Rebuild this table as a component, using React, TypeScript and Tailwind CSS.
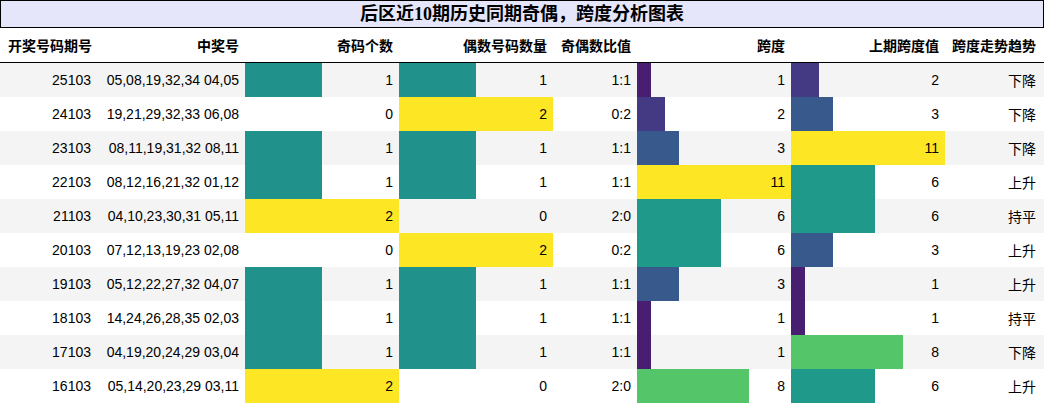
import React from "react";

type Row = {
  issue: string;
  nums: string;
  odd: number;
  even: number;
  ratio: string;
  span: number;
  prev: number;
  trend: string;
};

const rows: Row[] = [
  { issue: "25103", nums: "05,08,19,32,34 04,05", odd: 1, even: 1, ratio: "1:1", span: 1, prev: 2, trend: "下降" },
  { issue: "24103", nums: "19,21,29,32,33 06,08", odd: 0, even: 2, ratio: "0:2", span: 2, prev: 3, trend: "下降" },
  { issue: "23103", nums: "08,11,19,31,32 08,11", odd: 1, even: 1, ratio: "1:1", span: 3, prev: 11, trend: "下降" },
  { issue: "22103", nums: "08,12,16,21,32 01,12", odd: 1, even: 1, ratio: "1:1", span: 11, prev: 6, trend: "上升" },
  { issue: "21103", nums: "04,10,23,30,31 05,11", odd: 2, even: 0, ratio: "2:0", span: 6, prev: 6, trend: "持平" },
  { issue: "20103", nums: "07,12,13,19,23 02,08", odd: 0, even: 2, ratio: "0:2", span: 6, prev: 3, trend: "上升" },
  { issue: "19103", nums: "05,12,22,27,32 04,07", odd: 1, even: 1, ratio: "1:1", span: 3, prev: 1, trend: "上升" },
  { issue: "18103", nums: "14,24,26,28,35 02,03", odd: 1, even: 1, ratio: "1:1", span: 1, prev: 1, trend: "持平" },
  { issue: "17103", nums: "04,19,20,24,29 03,04", odd: 1, even: 1, ratio: "1:1", span: 1, prev: 8, trend: "下降" },
  { issue: "16103", nums: "05,14,20,23,29 03,11", odd: 2, even: 0, ratio: "2:0", span: 8, prev: 6, trend: "上升" },
];

// viridis-ish colours picked off the chart
const countColor: Record<number, string> = { 1: "#21918c", 2: "#fde725" };
const spanColor: Record<number, string> = {
  1: "#481f70",
  2: "#443a83",
  3: "#38598c",
  6: "#1f9a8a",
  8: "#54c568",
  11: "#fde725",
};

const bar = (value: number, max: number, color?: string) => {
  if (!value || !color) return undefined;
  const pct = (value / max) * 100;
  return { backgroundImage: `linear-gradient(90deg, ${color} ${pct}%, transparent ${pct}%)` };
};

const cell = "h-[34px] flex items-center justify-end pr-[6px] shrink-0";

export default function App() {
  return (
    <div className="w-[1044px] h-[405px] bg-white text-black overflow-hidden font-['Liberation_Sans','Noto_Sans_CJK_SC',sans-serif]">
      <div className="w-[1044px] h-[28px] border border-black bg-[#e6e6fa] flex items-center justify-center">
        <h1 className="text-[18px] font-bold leading-none font-['Liberation_Serif','Noto_Sans_CJK_SC',serif]">
          后区近10期历史同期奇偶，跨度分析图表
        </h1>
      </div>

      <div className="flex h-[35px] border-b border-black text-[14px] font-bold font-['Noto_Sans_CJK_SC',sans-serif]">
        <div className="w-[97px] flex items-center justify-end pr-[5px]">开奖号码期号</div>
        <div className="w-[148px] flex items-center justify-end pr-[6px]">中奖号</div>
        <div className="w-[154px] flex items-center justify-end pr-[6px]">奇码个数</div>
        <div className="w-[154px] flex items-center justify-end pr-[6px]">偶数号码数量</div>
        <div className="w-[84px] flex items-center justify-end pr-[6px]">奇偶数比值</div>
        <div className="w-[154px] flex items-center justify-end pr-[6px]">跨度</div>
        <div className="w-[154px] flex items-center justify-end pr-[6px]">上期跨度值</div>
        <div className="w-[98px] flex items-center justify-end pr-[7px]">跨度走势趋势</div>
      </div>

      <div className="text-[14px]">
        {rows.map((r, i) => (
          <div key={r.issue} className={`flex ${i % 2 === 0 ? "bg-[#f4f4f4]" : "bg-white"}`}>
            <div className={`${cell} w-[97px] pr-[5px]`}>{r.issue}</div>
            <div className={`${cell} w-[148px]`}>{r.nums}</div>
            <div className={`${cell} w-[154px]`} style={bar(r.odd, 2, countColor[r.odd])}>{r.odd}</div>
            <div className={`${cell} w-[154px]`} style={bar(r.even, 2, countColor[r.even])}>{r.even}</div>
            <div className={`${cell} w-[84px]`}>{r.ratio}</div>
            <div className={`${cell} w-[154px]`} style={bar(r.span, 11, spanColor[r.span])}>{r.span}</div>
            <div className={`${cell} w-[154px]`} style={bar(r.prev, 11, spanColor[r.prev])}>{r.prev}</div>
            <div className={`${cell} w-[98px] pr-[7px] font-['Noto_Sans_CJK_SC',sans-serif]`}>{r.trend}</div>
          </div>
        ))}
      </div>
    </div>
  );
}
